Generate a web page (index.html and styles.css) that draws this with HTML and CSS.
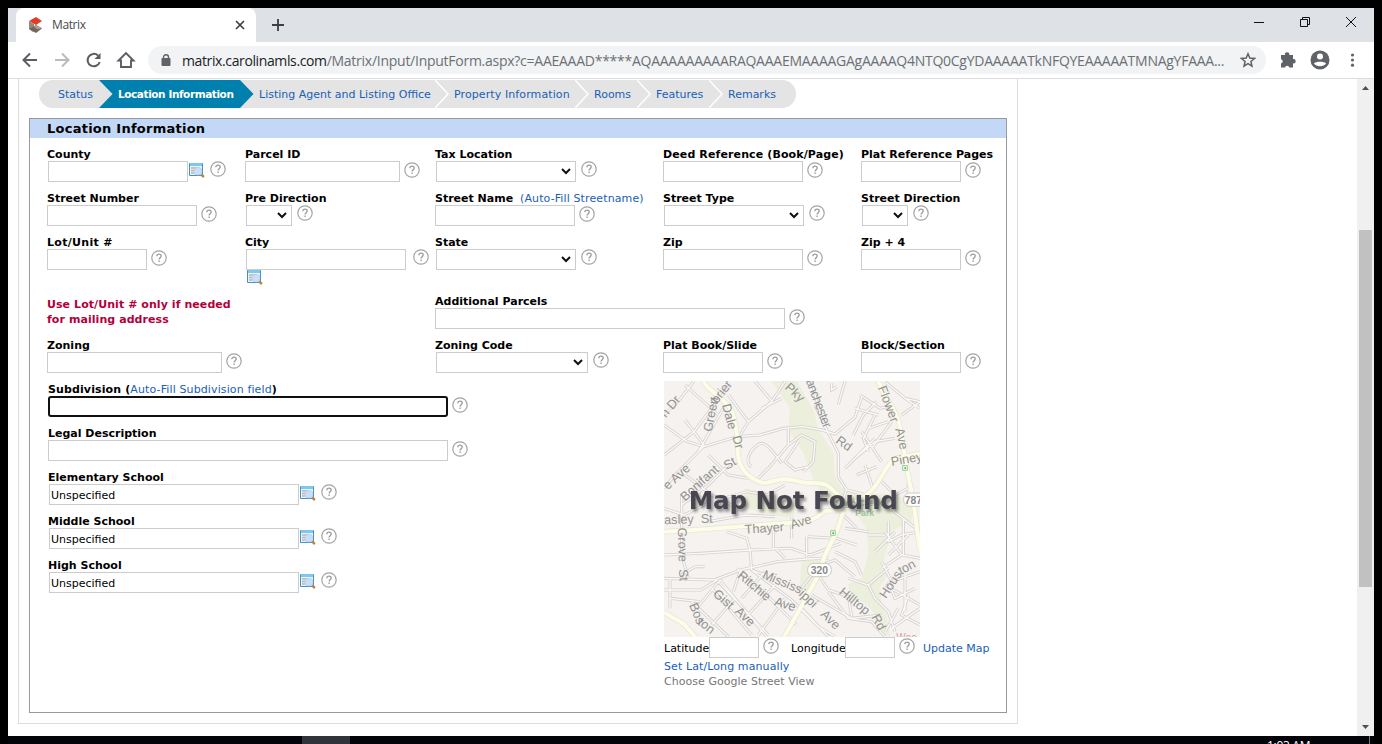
FILE: index.html
```html
<!DOCTYPE html>
<html lang="en">
<head>
<meta charset="utf-8">
<title>Matrix</title>
<link rel="stylesheet" href="styles.css">
</head>
<body>
<svg class="defs" width="0" height="0">
  <symbol id="help" viewBox="0 0 16 16">
    <circle cx="8" cy="8" r="7.2" fill="#fff" stroke="#a3a3a3" stroke-width="1.2"/>
    <path d="M5.8 6.2c0-1.3.9-2.1 2.2-2.1s2.2.8 2.2 2c0 1.6-2.1 1.7-2.1 3.4M8.1 10.6v1.5" fill="none" stroke="#999" stroke-width="1.3"/>
  </symbol>
  <symbol id="lookup" viewBox="0 0 16 16">
    <path d="M.5 1.500h13v12H.5z" fill="#eef2f5" stroke="#3e93c4"/>
    <path d="M1 1h12v3H1z" fill="#7cc8ee"/>
    <path d="M2 6h7M2 8.500h3M2 11h3" stroke="#b5b5b5" stroke-width="1.300"/>
    <path d="M12 12.300l2.900 2.700" stroke="#bd8144" stroke-width="2.400"/>
    <circle cx="9" cy="9.200" r="3.900" fill="#c8defa" stroke="#b0cbea" stroke-width=".7"/>
  </symbol>
  <symbol id="chev" viewBox="0 0 14 28"><path d="M0 0l13 14L0 28" fill="none" stroke="#fff" stroke-width="1.500"/></symbol>
  <symbol id="wedge" viewBox="0 0 14 28"><path d="M0 0l13.500 14L0 28z" fill="currentColor"/></symbol>
</svg>
<div class="window">
  <div class="tabstrip">
    <div class="browser-tab">
      <svg class="favicon" width="16" height="16" viewBox="0 0 16 16"><path d="M1 4l7-4 6 4-6 4z" fill="#e33b26"/><path d="M1 4l5 3v3l3 1.500-4 3.500-4-3z" fill="#968779"/><path d="M1 12l7-4 6 3.500L8 16z" fill="#74665b"/><path d="M8 8l6 3-4 1.500L6 10z" fill="#aaa097"/></svg>
      <span class="tab-title">Matrix</span>
      <svg class="tab-close" width="10" height="10" viewBox="0 0 10 10"><path d="M1 1l8 8M9 1L1 9" stroke="#3c4043" stroke-width="1.700"/></svg>
    </div>
    <svg class="newtab" width="12" height="12" viewBox="0 0 12 12"><path d="M6 0v12M0 6h12" stroke="#3c4043" stroke-width="1.800"/></svg>
    <svg class="winctl" width="104" height="12" viewBox="0 0 104 12" fill="none" stroke="#111"><path d="M0 6.500h10M46.500 3.500h7v7h-7zM48.500 3.500v-2h7v7h-2M92 1l10 10M102 1L92 11"/></svg>
  </div>
  <div class="toolbar">
    <svg class="nav" width="118" height="20" viewBox="0 0 118 20" fill="none" stroke="#5a5d62" stroke-width="2">
      <path d="M15 10H2M8 3.500L1.500 10 8 16.500"/>
      <path d="M33 10h13M40 3.500L46.500 10 40 16.500" stroke="#babbbe"/>
      <path d="M76 5.500A6.200 6.200 0 1 0 77.700 12"/><path d="M78.500 3v6H72.500z" fill="#5a5d62" stroke="none"/>
      <path d="M96.500 10.500h2.500V17h10v-6.500h2.500L104 3z" stroke-width="1.900"/>
    </svg>
    <div class="address">
      <svg class="lock" width="10" height="13" viewBox="0 0 10 13"><rect x=".5" y="4" width="9" height="8" rx="1" fill="#5f6368"/><path d="M2.500 5V3.200a2.500 2.500 0 0 1 5 0V5" fill="none" stroke="#5f6368" stroke-width="1.400"/></svg>
      <span class="url"><span class="host">matrix.carolinamls.com</span><span class="path">/Matrix/Input/InputForm.aspx?c=AAEAAAD*****AQAAAAAAAAARAQAAAEMAAAAGAgAAAAQ4NTQ0CgYDAAAAATkNFQYEAAAAATMNAgYFAAA...</span></span>
      <svg class="star" width="16" height="16" viewBox="0 0 16 16"><path d="M8 1.800l1.800 4.300 4.700.4-3.600 3 1.100 4.600L8 11.700l-4 2.400 1.100-4.600-3.600-3 4.700-.4z" fill="none" stroke="#5f6368" stroke-width="1.500"/></svg>
    </div>
    <svg class="ext" width="78" height="20" viewBox="0 0 78 20" fill="#5f6368">
      <path d="M1 5h4a2.200 2.200 0 1 1 4.300 0H13v4a2.200 2.200 0 1 1 0 4.300V17.500H9.300a2.200 2.200 0 0 0-4.300 0H1v-4a2.200 2.200 0 0 0 0-4.300z"/>
      <circle cx="40" cy="10" r="9.500"/><circle cx="40" cy="6.600" r="3" fill="#fff"/><path d="M34 13.500c1-2.500 11-2.500 12 0-2.500 3.700-9.500 3.700-12 0z" fill="#fff"/>
      <circle cx="72.500" cy="5" r="1.600"/><circle cx="72.500" cy="10" r="1.600"/><circle cx="72.500" cy="15.200" r="1.600"/>
    </svg>
  </div>
  <div class="viewport">
    <div class="page">
      <nav class="steps">
        <a class="step s1">Status</a>
        <a class="step s2"><svg class="sep gray"><use href="#wedge"/></svg>Location Information</a>
        <a class="step s3"><svg class="sep blue"><use href="#wedge"/></svg>Listing Agent and Listing Office</a>
        <a class="step s4"><svg class="sep"><use href="#chev"/></svg>Property Information</a>
        <a class="step s5"><svg class="sep"><use href="#chev"/></svg>Rooms</a>
        <a class="step s6"><svg class="sep"><use href="#chev"/></svg>Features</a>
        <a class="step s7"><svg class="sep"><use href="#chev"/></svg>Remarks</a>
      </nav>
      <section class="panel">
        <h2>Location Information</h2>
        <div class="fields">
          <div class="field"><label>County</label><div class="ctl in1"><span class="box w140"></span><svg class="look"><use href="#lookup"/></svg><svg class="q up"><use href="#help"/></svg></div></div>
          <div class="field"><label>Parcel ID</label><div class="ctl"><span class="box w155"></span><svg class="q"><use href="#help"/></svg></div></div>
          <div class="field"><label>Tax Location</label><div class="ctl in1"><span class="box sel w140"><svg class="arr" viewBox="0 0 10 7"><path d="M1 1l4 4 4-4"/></svg></span><svg class="q up"><use href="#help"/></svg></div></div>
          <div class="field"><label class="deed">Deed Reference (Book/Page)</label><div class="ctl"><span class="box w140"></span><svg class="q"><use href="#help"/></svg></div></div>
          <div class="field"><label>Plat Reference Pages</label><div class="ctl"><span class="box w100"></span><svg class="q"><use href="#help"/></svg></div></div>

          <div class="field"><label>Street Number</label><div class="ctl"><span class="box w150"></span><svg class="q"><use href="#help"/></svg></div></div>
          <div class="field"><label>Pre Direction</label><div class="ctl in1"><span class="box sel w46"><svg class="arr" viewBox="0 0 10 7"><path d="M1 1l4 4 4-4"/></svg></span><svg class="q up"><use href="#help"/></svg></div></div>
          <div class="field"><label>Street Name <span class="link gap">(Auto-Fill Streetname)</span></label><div class="ctl"><span class="box w140"></span><svg class="q"><use href="#help"/></svg></div></div>
          <div class="field"><label>Street Type</label><div class="ctl in1"><span class="box sel w140"><svg class="arr" viewBox="0 0 10 7"><path d="M1 1l4 4 4-4"/></svg></span><svg class="q up"><use href="#help"/></svg></div></div>
          <div class="field"><label>Street Direction</label><div class="ctl in1"><span class="box sel w46"><svg class="arr" viewBox="0 0 10 7"><path d="M1 1l4 4 4-4"/></svg></span><svg class="q up"><use href="#help"/></svg></div></div>

          <div class="field"><label class="lot">Lot/Unit #</label><div class="ctl"><span class="box w100"></span><svg class="q"><use href="#help"/></svg></div></div>
          <div class="field"><label>City</label><div class="ctl in1"><span class="box w160"></span><svg class="q up far"><use href="#help"/></svg></div><svg class="look below"><use href="#lookup"/></svg></div>
          <div class="field"><label>State</label><div class="ctl in1"><span class="box sel w140"><svg class="arr" viewBox="0 0 10 7"><path d="M1 1l4 4 4-4"/></svg></span><svg class="q up"><use href="#help"/></svg></div></div>
          <div class="field"><label>Zip</label><div class="ctl"><span class="box w140"></span><svg class="q"><use href="#help"/></svg></div></div>
          <div class="field"><label>Zip + 4</label><div class="ctl"><span class="box w100"></span><svg class="q"><use href="#help"/></svg></div></div>

          <p class="note">Use Lot/Unit # only if needed<br>for mailing address</p>
          <div class="field c3"><label>Additional Parcels</label><div class="ctl"><span class="box w350"></span><svg class="q"><use href="#help"/></svg></div></div>

          <div class="field c1"><label>Zoning</label><div class="ctl"><span class="box w175"></span><svg class="q"><use href="#help"/></svg></div></div>
          <div class="field c3"><label>Zoning Code</label><div class="ctl in1"><span class="box sel w152"><svg class="arr" viewBox="0 0 10 7"><path d="M1 1l4 4 4-4"/></svg></span><svg class="q up"><use href="#help"/></svg></div></div>
          <div class="field"><label>Plat Book/Slide</label><div class="ctl"><span class="box w100"></span><svg class="q"><use href="#help"/></svg></div></div>
          <div class="field"><label>Block/Section</label><div class="ctl"><span class="box w100"></span><svg class="q"><use href="#help"/></svg></div></div>
        </div>
        <div class="lower">
          <div class="wide">
            <div class="field"><label class="subdiv">Subdivision (<span class="link">Auto-Fill Subdivision field</span>)</label><div class="ctl"><span class="box focus w400"></span><svg class="q"><use href="#help"/></svg></div></div>
            <div class="field"><label>Legal Description</label><div class="ctl"><span class="box w400"></span><svg class="q"><use href="#help"/></svg></div></div>
            <div class="field"><label>Elementary School</label><div class="ctl in1"><span class="box w250">Unspecified</span><svg class="look"><use href="#lookup"/></svg><svg class="q up"><use href="#help"/></svg></div></div>
            <div class="field"><label>Middle School</label><div class="ctl in1"><span class="box w250">Unspecified</span><svg class="look"><use href="#lookup"/></svg><svg class="q up"><use href="#help"/></svg></div></div>
            <div class="field"><label>High School</label><div class="ctl in1"><span class="box w250">Unspecified</span><svg class="look"><use href="#lookup"/></svg><svg class="q up"><use href="#help"/></svg></div></div>
          </div>
          <div class="mapcol">
            <svg class="map" viewBox="27 18 768 768">
              <defs>
                <g id="minor">
                  <path d="M245 185l70-5 70-20 60-5 55 10 40 12 60-50 20-60M27 240l90-70 60-80 50-60M27 120l50-50 40-52M90 30l100 90M27 150l70 50 50 15 100-30M150 215l-60-80M205 100l-75 130M145 215L60 300l-33 40M250 190l30-50 70-60 40-60M280 140l-60-80M300 18l50 60M320 100l60-30M400 160v50l-60 70-30 30M400 210l40-30 40 20-5 60-30 30M290 275c-30-20 10-70 30-70s60 60 60 60M430 200l-40 60 30 25 40-10M80 390l80-60 60-60M90 300l80 60 60 30M160 240l60 60 60 10M205 370l70-20 60 10 55-30M27 400l60 20 80-40M80 360v180l20 70M160 440l110-20 90 5"/>
                  <path d="M27 540l110-5 150-10 120-5 60 20 90-35M285 525l-10-35-60-20M285 525l5 60 40 15M355 520v-50M360 520l30 30M410 490v-60M455 485v60M460 485l80 5M27 610l150 5 80-30 110-25 90-8 65-3M45 610v90M27 645h110l50-30M45 670l90 10M80 600l40-25 30 0M125 700l70-85 90 110 50 60M190 620l150 160M245 580l80 70 100 100M255 590l-20 60M170 640l120 140M110 680l110 105M330 590l-70 80M360 630l-90 100M390 670l-80 110M240 670l-70 80M290 585l120 90 80 80 50 30M440 700l80 85M430 650l50-60M470 660l120 70 90-10M490 600l30 45 60 20 10 60M500 570l40-15 60 50M545 490l60 20M570 460l70 10M540 530l60 30 20 40"/>
                  <path d="M480 90l40 85 30 60 0 70 25 40 60 15M470 18l20 80 20 60M595 180l30-60 40-40M600 100l70 20M615 60l60 40 40-10M530 25v20l15-10M570 18l-20 70M660 120l-35 70 15 40M640 160l60-20M600 250l60-50 60-10M570 280l90-90M605 300l60-25M620 170l60 90M710 140l-60 80M740 120l55-40M750 70l45 30M690 20l60 50 45 10M760 320v60M760 350l35 30M680 320l40 40 40-20M650 330l-20-60M575 340l-20 70 50 50M700 440v60l40-20 55-10M690 470l50 70 55 10M700 540l60-60M745 430v110M705 400l90 70M680 560l30 60 85-30M680 580l60-40M690 630l105 60M700 620l20 50 60-30M750 600v110M640 630l60-50M580 610l60 20 20 40 40 40 20 60M520 650l60 80 70 10 40 45M730 700l-40 70M760 660l-20 60 55 30M710 760l85-60M640 480h50M720 470l-60 60"/>
                </g>
                <path id="major" d="M145 18c15 30 40 35 60 60 30 20 35 60 42 110 0 50 0 80 30 110 30 25 50 28 60 25 40-12 60-14 100-2 30 6 60 0 80 10l48 42M565 410l-20 60-35 70-25 70-55 100-45 80M27 470l100-6 160-12 170-12 30-15 25-18 55 0M555 410l80-50c50-40 50-90 90-110l70-15M670 18c20 60 60 90 65 140l20 120 20 100 20 150M27 712l60 35 35 40"/>
              </defs>
              <rect x="27" y="18" width="768" height="768" fill="#f5f2ef"/>
              <path d="M350 18h75l50 85 15 60 45 70 5 70 20 35 50 15 100 5 65 20-5 60-60 30-10 40-15 50 10 45-20 35 5 45 15 40 10 60h-25l-20-65-25-30-50-25-5-35 40-20 20-70-5-75-40-60-80-20-40-70-30-80-45-65 5-70zM270 340l75 15 80 30-10 45-90-15-60-20zM440 555h70l-15 60-65 50z" fill="#ecefdc"/>
              <use href="#minor" fill="none" stroke="#d5d1cd" stroke-width="9"/>
              <use href="#minor" fill="none" stroke="#fbfaf9" stroke-width="4"/>
              <use href="#major" fill="none" stroke="#e4e3d5" stroke-width="16"/>
              <use href="#major" fill="none" stroke="#fcfde6" stroke-width="12"/>
              <g class="roads">
                <text transform="translate(32 130) rotate(-50)">n Dr</text>
                <text transform="translate(170 172) rotate(-79)">Green</text><text transform="translate(186 88) rotate(-52)">brier</text>
                <text transform="translate(201 90) rotate(75)">Dale</text><text transform="translate(232 185) rotate(75)">Dr</text>
                <text transform="translate(388 40) rotate(43)">Pky</text>
                <text transform="translate(452 18) rotate(69)" textLength="153">anchester</text><text transform="translate(540 202) rotate(35)">Rd</text>
                <text transform="translate(668 38) rotate(69)">Flower</text><text transform="translate(721 162) rotate(77)">Ave</text>
                <text transform="translate(710 273) rotate(-10)">Piney</text>
                <text transform="translate(38 346) rotate(-42)">e Ave</text>
                <text transform="translate(90 380) rotate(-42)">Bonifant</text><text transform="translate(215 285) rotate(-30)">St</text>
                <text transform="translate(28 448) rotate(-2)">asley&#160; St</text>
                <text transform="translate(270 476) rotate(-4)">Thayer</text><text transform="translate(410 462) rotate(-17)">Ave</text>
                <text transform="translate(68 458) rotate(88)">Grove&#160; St</text>
                <text transform="translate(245 605) rotate(40)">Ritchie</text><text transform="translate(356 690) rotate(17)">Ave</text>
                <text transform="translate(320 608) rotate(23)">Mississ</text><text transform="translate(430 660) rotate(43)">ippi</text><text transform="translate(495 720) rotate(45)">Ave</text>
                <text transform="translate(172 660) rotate(41)">Gist</text><text transform="translate(238 712) rotate(43)">Ave</text>
                <text transform="translate(102 690) rotate(68)">Bos</text><text transform="translate(126 746) rotate(38)">ton</text>
                <text transform="translate(550 655) rotate(39)">Hilltop</text><text transform="translate(649 726) rotate(62)">Rd</text>
                <text transform="translate(693 672) rotate(-57)">Hous</text><text transform="translate(738 600) rotate(-28)">ton</text>
              </g>
              <g class="park"><text x="540" y="394">Sligo Creek</text><text x="601" y="424">Park</text></g>
              <g fill="#f4fbf0" stroke="#93cd94" stroke-width="3"><path d="M743 272h14v14h-14zM527 467h14v14h-14z"/></g>
              <path d="M748 277h5v5h-5zM532 472h5v5h-5z" fill="#5fae68"/>
              <rect x="458" y="565" width="71" height="40" rx="18" fill="#fff" stroke="#cccabb" stroke-width="3"/>
              <rect x="746" y="354" width="70" height="40" rx="18" fill="#fff" stroke="#ccc" stroke-width="3"/>
              <g class="shield"><text x="467" y="597">320</text><text x="749" y="386">787</text></g>
              <text class="woods" x="724" y="798">Woo</text>
              <text class="missing" x="101" y="403" textLength="628">Map Not Found</text>
            </svg>
            <div class="coords"><span class="lat">Latitude</span><span class="box w50"></span><svg class="q"><use href="#help"/></svg><span class="lng">Longitude</span><span class="box w50"></span><svg class="q"><use href="#help"/></svg><a class="link update">Update Map</a></div>
            <a class="link setll">Set Lat/Long manually</a>
            <span class="street">Choose Google Street View</span>
          </div>
        </div>
      </section>
    </div>
    <div class="scrollbar">
      <svg width="7" height="4" viewBox="0 0 7 4"><path d="M0 4l3.500-4L7 4z" fill="#505050"/></svg>
      <div class="thumb"></div>
      <svg class="down" width="7" height="4" viewBox="0 0 7 4"><path d="M0 0l3.500 4L7 0z" fill="#505050"/></svg>
    </div>
  </div>
</div>
<div class="taskbar"><span class="task"></span><span class="clock">1:03 AM</span><span class="edge"></span></div>
</body>
</html>
```

FILE: styles.css
```css
* { box-sizing: border-box; }
body { margin: 0; width: 1382px; height: 744px; overflow: hidden; background: #000; padding: 8px 8px 0; font: 11px/15px "DejaVu Sans", Verdana, sans-serif; color: #000; }
svg { display: block; flex: none; }
.defs { position: absolute; }
.window { height: 728px; background: #fff; display: flex; flex-direction: column; }

.tabstrip { height: 34px; background: #dee1e6; display: flex; align-items: flex-start; padding-left: 8px; }
.browser-tab { width: 240px; height: 34px; background: #fff; border-radius: 8px 8px 0 0; display: flex; align-items: center; padding: 0 11px 0 12px; }
.tab-title { font: 12px/16px "Open Sans", "Noto Sans", sans-serif; letter-spacing: -0.4px; color: #45494d; margin-left: 8px; flex: 1; }
.newtab { margin: 11px 0 0 16px; }
.winctl { margin: 8px 16px 0 auto; }
.toolbar { height: 37px; border-bottom: 1px solid #dadce0; display: flex; align-items: center; padding-left: 14px; }
.nav { margin-right: 8px; }
.address { width: 1118px; height: 28px; border-radius: 14px; background: #f1f3f4; display: flex; align-items: center; padding: 0 10px 0 13px; }
.url { font: 14px/20px "Open Sans", "Noto Sans", sans-serif; color: #6c7075; width: 1059px; margin-left: 11px; white-space: nowrap; letter-spacing: -0.26px; padding-top: 1px; }
.host { color: #202124; letter-spacing: -0.38px; }
.star { margin-left: auto; }
.ext { margin-left: 14px; }

.viewport { flex: 1; display: flex; justify-content: space-between; min-height: 0; }
.page { width: 1000px; height: 645px; margin-left: 10px; border: 1px solid #ddd; border-top: 0; padding: 1px 10px 0; }
.steps { display: flex; margin-left: 10px; width: 757px; height: 28px; border-radius: 14px; overflow: hidden; background: #e4e4e4; }
.step { position: relative; flex: none; padding-left: 19px; line-height: 29px; height: 28px; color: #1a5eb8; white-space: nowrap; }
.sep { position: absolute; left: 0; top: 0; width: 14px; height: 28px; }
.gray { color: #e4e4e4; }
.blue { color: #0080ae; }
.s1 { width: 60px; }
.s2 { width: 141px; background: #0080ae; color: #fff; font-weight: bold; font-size: 10.5px; letter-spacing: -0.42px; }
.s3 { width: 195px; }
.s4 { width: 140px; letter-spacing: 0.1px; }
.s5 { width: 62px; }
.s6 { width: 72px; }
.s7 { width: 87px; }

.panel { width: 978px; height: 595px; margin-top: 10px; border: 1px solid #999; }
h2 { margin: 0; height: 19px; background: #c3d8f6; font-size: 13px; line-height: 19px; letter-spacing: 0.25px; padding-left: 17px; }
.fields { display: grid; grid-template-columns: 198px 190px 228px 198px 140px; grid-template-rows: 44px 44px 59px 44px 44px; padding: 8px 0 0 17px; }
.field { height: 44px; }
label { display: block; height: 15px; line-height: 17px; font-weight: bold; white-space: nowrap; }
.deed, .subdiv { letter-spacing: 0.12px; }
.lot { letter-spacing: 0.3px; }
.link { color: #1a5eb8; font-weight: normal; }
.gap { margin-left: 3px; letter-spacing: 0.12px; }
.ctl { display: flex; }
.in1 { padding-left: 1px; }
.box { flex: none; height: 21px; border: 1px solid #ccc; background: #fff; padding-left: 1px; line-height: 21px; }
.sel { display: flex; align-items: center; justify-content: flex-end; padding-right: 4px; }
.arr { width: 10px; height: 7px; fill: none; stroke: #111; stroke-width: 2; }
.focus { border: 2px solid #101010; border-radius: 3px; }
.q { width: 16px; height: 16px; margin: 1px 0 0 4px; }
.q.up { margin: 0 0 0 5px; }
.q.far { margin-left: 7px; }
.look { width: 16px; height: 16px; margin: 1px 0 0 1px; }
.below { margin: -1px 0 0 2px; }
.w46 { width: 46px; } .w50 { width: 50px; } .w100 { width: 100px; } .w140 { width: 140px; }
.w150 { width: 150px; } .w152 { width: 152px; } .w155 { width: 155px; } .w160 { width: 160px; }
.w175 { width: 175px; } .w250 { width: 250px; } .w350 { width: 350px; } .w400 { width: 400px; }
.note { grid-column: 1 / 3; margin: 4px 0 0; font-weight: bold; letter-spacing: 0.07px; color: #b3003b; }
.c1 { grid-column: 1; }
.c3 { grid-column: 3; }
.lower { display: flex; padding-left: 18px; }
.wide { width: 616px; }
.mapcol { width: 340px; display: flex; flex-direction: column; align-items: flex-start; }
.map { width: 256px; height: 256px; }
.roads { font: 38px "Liberation Sans", Arial, sans-serif; fill: #929292; }
.park { font: bold 26px "Liberation Sans", Arial, sans-serif; fill: #9fc3a2; }
.shield { font: bold 31px "Liberation Sans", Arial, sans-serif; fill: #888; }
.woods { font: 30px "Liberation Sans", Arial, sans-serif; fill: #d3a5a5; }
.missing { font: bold 74px "DejaVu Sans", Verdana, sans-serif; fill: #4a4651; filter: drop-shadow(6px 8px 5px rgba(60, 60, 60, 0.6)); }
.coords { display: flex; height: 21px; line-height: 23px; white-space: nowrap; }
.lat { width: 45px; }
.lng { width: 54px; margin-left: 12px; }
.update { margin-left: 8px; }
.setll { margin-top: 1px; letter-spacing: 0.1px; }
.street { color: #777; letter-spacing: 0.04px; }

.scrollbar { width: 17px; background: #f0f0f0; display: flex; flex-direction: column; align-items: center; padding-top: 7px; }
.thumb { width: 13px; height: 357px; margin-top: 140px; background: #c1c1c1; }
.down { margin-top: 138px; }
.taskbar { height: 8px; display: flex; overflow: hidden; background: #02040a; }
.task { width: 48px; margin-left: 294px; background: #30333a; }
.clock { margin-left: 917px; width: 102px; color: #fff; font: 12px/14px "Open Sans", sans-serif; letter-spacing: -0.3px; padding-top: 3px; white-space: nowrap; }
.edge { width: 1px; background: #777; }
```
